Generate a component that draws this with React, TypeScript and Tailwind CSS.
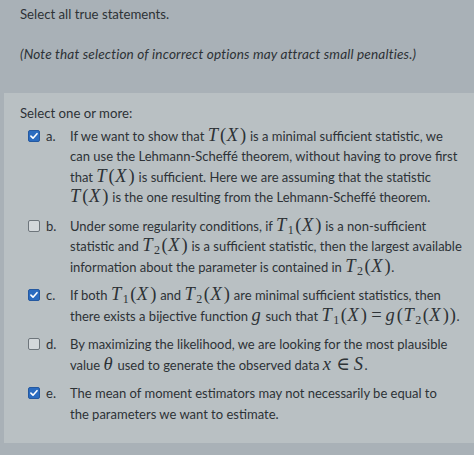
import React from "react";

const serif = "font-['Liberation_Serif','DejaVu_Serif',serif] leading-[0]";

function V({ children }: { children: React.ReactNode }) {
  return <span className={`${serif} italic text-[18.5px] pr-[1.5px]`}>{children}</span>;
}

function P({ children }: { children: React.ReactNode }) {
  return <span className={`${serif} text-[18.5px] px-[0.5px]`}>{children}</span>;
}

function T({ sub }: { sub?: string }) {
  return (
    <span className="whitespace-nowrap">
      <V>T</V>
      {sub && <span className={`${serif} text-[12px] relative top-[3px] pr-[1px]`}>{sub}</span>}
      <P>(</P>
      <V>X</V>
      <P>)</P>
    </span>
  );
}

function Box({ checked }: { checked: boolean }) {
  if (checked) {
    return (
      <span className="flex h-[12px] w-[12px] items-center justify-center rounded-[2px] bg-[#2b6cc0] border border-[#2559a0]">
        <svg viewBox="0 0 12 12" className="h-[10px] w-[10px]">
          <path d="M2.3 6.2 L4.8 8.6 L9.6 3.2" fill="none" stroke="white" strokeWidth="1.9" strokeLinecap="round" strokeLinejoin="round" />
        </svg>
      </span>
    );
  }
  return <span className="block h-[12px] w-[12px] rounded-[2px] border border-[#6d757b] bg-[#d3d8db]" />;
}

function Option({
  letter,
  checked,
  narrow,
  children,
}: {
  letter: string;
  checked: boolean;
  narrow?: boolean;
  children: React.ReactNode;
}) {
  return (
    <div className="flex mb-[8px]">
      <div className="w-[24px] pl-[8px] pt-[4px] shrink-0">
        <Box checked={checked} />
      </div>
      <div className="w-[26px] pl-[2px] shrink-0">{letter}.</div>
      <div className={narrow ? "flex-1 pr-[24px]" : "flex-1 pr-[10px]"}>{children}</div>
    </div>
  );
}

export default function App() {
  return (
    <div className="w-[474px] h-[455px] overflow-hidden bg-[#a9b1b7] text-[#2d3236] text-[13px] leading-[20.5px] font-['Lato','Open_Sans',sans-serif]">
      <div className="pl-[20px] pt-[4px] text-[13.2px]">Select all true statements.</div>
      <div className="pl-[20px] mt-[19px] italic text-[13.6px] tracking-[0.15px]">(Note that selection of incorrect options may attract small penalties.)</div>
      <div className="ml-[4px] mt-[29px] h-[350px] bg-[#b9c0c3] pt-[10px] pl-[16px]">
        <div className="mb-[2px] text-[13.2px]">Select one or more:</div>
        <Option letter="a" checked>
          If we want to show that <T /> is a minimal sufficient statistic, we can use the Lehmann-Scheffé theorem, without having to prove first that <T /> is sufficient. Here we are assuming that the statistic <T /> is the one resulting from the Lehmann-Scheffé theorem.
        </Option>
        <Option letter="b" checked={false}>
          Under some regularity conditions, if <T sub="1" /> is a non-sufficient statistic and <T sub="2" /> is a sufficient statistic, then the largest available information about the parameter is contained in <T sub="2" />.
        </Option>
        <Option letter="c" checked>
          If both <T sub="1" /> and <T sub="2" /> are minimal sufficient statistics, then there exists a bijective function <V>g</V> such that{" "}
          <span className="whitespace-nowrap">
            <T sub="1" /> <P>=</P> <V>g</V>
            <P>(</P>
            <T sub="2" />
            <P>)</P>
          </span>
          .
        </Option>
        <Option letter="d" checked={false}>
          By maximizing the likelihood, we are looking for the most plausible value <V>θ</V> used to generate the observed data <V>x</V> <P>∈</P> <V>S</V>.
        </Option>
        <Option letter="e" checked narrow>
          The mean of moment estimators may not necessarily be equal to the parameters we want to estimate.
        </Option>
      </div>
    </div>
  );
}
